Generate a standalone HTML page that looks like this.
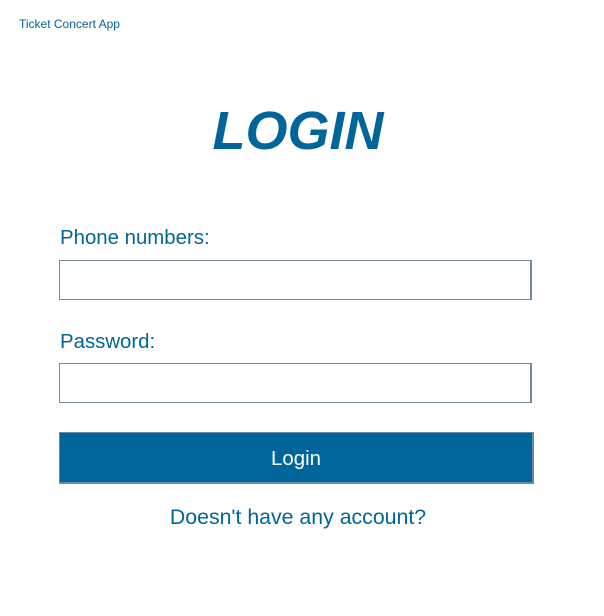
<!DOCTYPE html>
<html><head><style>
body{margin:0;width:604px;height:616px;background:#fff;font-family:"Liberation Sans",sans-serif;color:#006699;position:relative;overflow:hidden}
.a{position:absolute}
.in{position:absolute;left:59px;width:470px;height:38px;border:1px solid #778899;border-right-width:2px;background:#fff}
</style></head><body>
<div class="a" style="left:19px;top:17px;font-size:12px">Ticket Concert App</div>
<div class="a" style="left:0;width:596px;top:100px;text-align:center;font-size:54px;font-weight:bold;font-style:italic">LOGIN</div>
<div class="a" style="left:60px;top:227px;font-size:20.4px">Phone numbers:</div>
<div class="in" style="top:260px"></div>
<div class="a" style="left:60px;top:331px;font-size:20.4px">Password:</div>
<div class="in" style="top:363px"></div>
<div class="a" style="left:59px;top:432px;background:#00659b;border:1px solid #6a8ba5;border-right-width:2px;border-bottom-width:2px;width:472px;height:49px;color:#fff;font-size:20.4px;text-align:center;line-height:53px">Login</div>
<div class="a" style="left:0;width:596px;top:505px;text-align:center;font-size:21.3px">Doesn't have any account?</div>
</body></html>
